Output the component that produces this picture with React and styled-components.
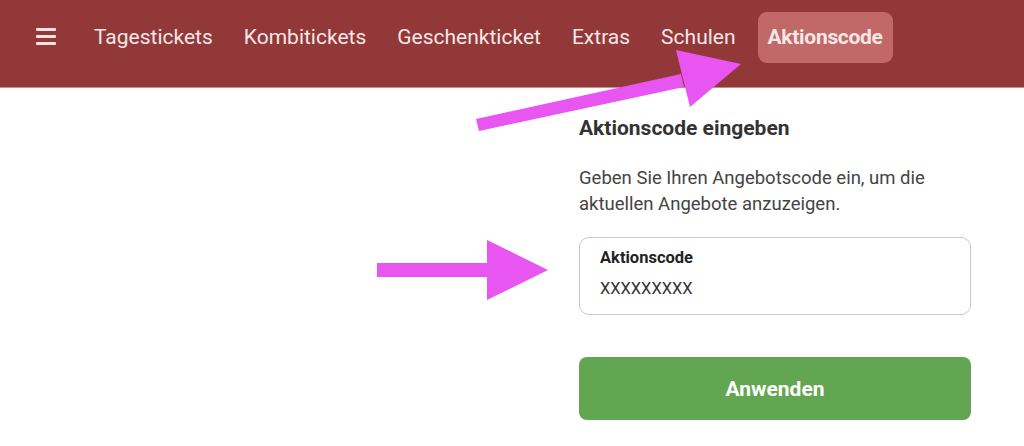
import React from 'react';
import styled, { createGlobalStyle } from 'styled-components';

const GlobalStyle = createGlobalStyle`
  html, body {
    margin: 0;
    padding: 0;
    background: #fff;
  }
  body {
    font-family: Roboto, "Liberation Sans", Arial, sans-serif;
    width: 1024px;
    height: 446px;
    overflow: hidden;
  }
`;

const Page = styled.div`
  position: relative;
  width: 1024px;
  height: 446px;
`;

const Header = styled.header`
  height: 88px;
  background: #933839;
  border-bottom: 1px solid #c98a8a;
  display: flex;
  align-items: center;
  padding-left: 36px;
  box-sizing: border-box;
`;

const MenuButton = styled.div`
  width: 20px;
  height: 17px;
  display: flex;
  flex-direction: column;
  justify-content: space-between;
  margin-right: 27px;
  margin-top: -14px;
  span {
    display: block;
    height: 3px;
    background: #f3e3e1;
    border-radius: 1px;
  }
`;

const Nav = styled.nav`
  display: flex;
  align-items: center;
  gap: 9px;
  margin-top: -13px;
`;

const NavItem = styled.a`
  display: flex;
  align-items: center;
  height: 51px;
  padding: 0 ${(p) => (p.$active ? 10 : 11)}px;
  margin-left: ${(p) => (p.$active ? 2 : 0)}px;
  border-radius: 9px;
  font-size: 21px;
  color: #f5e7e5;
  text-decoration: none;
  white-space: nowrap;
  font-weight: ${(p) => (p.$active ? 700 : 400)};
  background: ${(p) => (p.$active ? '#c16868' : 'transparent')};
  letter-spacing: ${(p) => (p.$active ? '-0.3px' : '0')};
`;

const Main = styled.main`
  display: flex;
  justify-content: flex-end;
  padding: 28px 53px 0 0;
`;

const Panel = styled.section`
  width: 392px;
  display: flex;
  flex-direction: column;
`;

const Title = styled.h2`
  margin: 0;
  font-size: 21px;
  line-height: 24px;
  font-weight: 700;
  color: #333;
`;

const Intro = styled.p`
  margin: 25px 0 20px;
  font-size: 18.5px;
  line-height: 26px;
  color: #444;
`;

const Field = styled.label`
  display: flex;
  flex-direction: column;
  height: 78px;
  box-sizing: border-box;
  border: 1px solid #c9c9c9;
  border-radius: 10px;
  padding: 9px 20px 0;
`;

const FieldLabel = styled.span`
  font-size: 16.5px;
  line-height: 22px;
  font-weight: 700;
  color: #222;
`;

const FieldInput = styled.input`
  border: none;
  outline: none;
  padding: 0;
  margin-top: 9px;
  font-family: inherit;
  font-size: 16.4px;
  line-height: 22px;
  color: #333;
  background: transparent;
`;

const ApplyButton = styled.button`
  margin-top: 42px;
  height: 63px;
  border: none;
  border-radius: 8px;
  background: #63a651;
  color: #fff;
  font-family: inherit;
  font-size: 21px;
  font-weight: 700;
  cursor: pointer;
`;

const Overlay = styled.svg`
  position: absolute;
  left: 0;
  top: 0;
  pointer-events: none;
`;

const navItems = ['Tagestickets', 'Kombitickets', 'Geschenkticket', 'Extras', 'Schulen'];

export default function App() {
  return (
    <Page>
      <GlobalStyle />
      <Header>
        <MenuButton>
          <span />
          <span />
          <span />
        </MenuButton>
        <Nav>
          {navItems.map((item) => (
            <NavItem key={item}>{item}</NavItem>
          ))}
          <NavItem $active>Aktionscode</NavItem>
        </Nav>
      </Header>
      <Main>
        <Panel>
          <Title>Aktionscode eingeben</Title>
          <Intro>
            Geben Sie Ihren Angebotscode ein, um die aktuellen Angebote anzuzeigen.
          </Intro>
          <Field>
            <FieldLabel>Aktionscode</FieldLabel>
            <FieldInput defaultValue="XXXXXXXXX" />
          </Field>
          <ApplyButton>Anwenden</ApplyButton>
        </Panel>
      </Main>
      <Overlay width="1024" height="446" viewBox="0 0 1024 446">
        <g fill="#e855f0">
          <polygon points="476,119 681,74 684,87 479,131" />
          <polygon points="676,50 741,64 690,107" />
          <rect x="377" y="263" width="112" height="14" />
          <polygon points="487,240 548,270 487,300" />
        </g>
      </Overlay>
    </Page>
  );
}
